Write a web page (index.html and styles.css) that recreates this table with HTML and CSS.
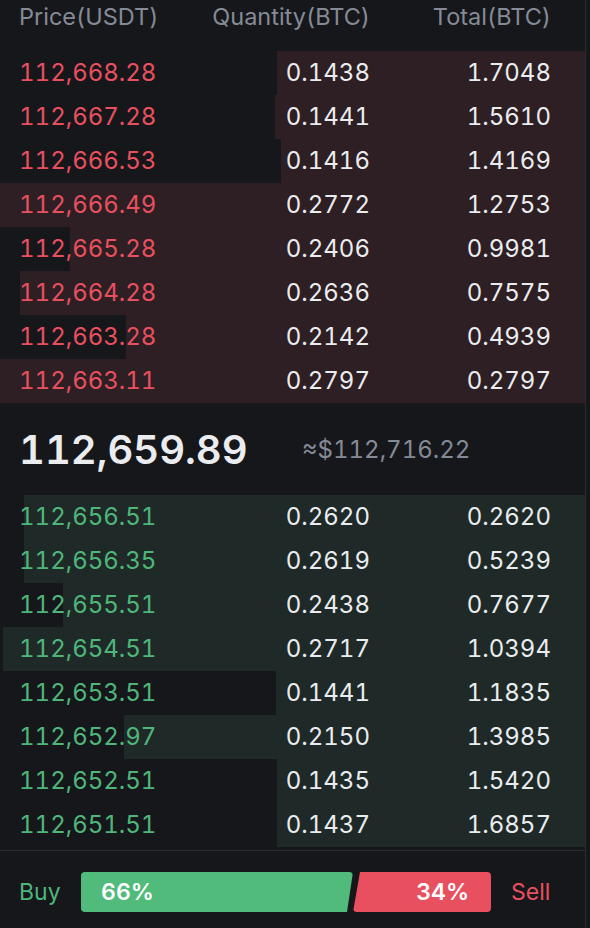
FILE: index.html
```html
<!DOCTYPE html>
<html>
<head>
<meta charset="utf-8">
<link rel="stylesheet" href="styles.css">
</head>
<body>
<div class="book">
  <div class="row head">
    <span>Price(USDT)</span>
    <span class="r">Quantity(BTC)</span>
    <span class="r">Total(BTC)</span>
  </div>
  <div class="asks">
    <div class="row ask" style="--w:308px"><span class="p">112,668.28</span><span class="r">0.1438</span><span class="r">1.7048</span></div>
    <div class="row ask" style="--w:310px"><span class="p">112,667.28</span><span class="r">0.1441</span><span class="r">1.5610</span></div>
    <div class="row ask" style="--w:304px"><span class="p">112,666.53</span><span class="r">0.1416</span><span class="r">1.4169</span></div>
    <div class="row ask" style="--w:585px"><span class="p">112,666.49</span><span class="r">0.2772</span><span class="r">1.2753</span></div>
    <div class="row ask" style="--w:515px"><span class="p">112,665.28</span><span class="r">0.2406</span><span class="r">0.9981</span></div>
    <div class="row ask" style="--w:565px"><span class="p">112,664.28</span><span class="r">0.2636</span><span class="r">0.7575</span></div>
    <div class="row ask" style="--w:459px"><span class="p">112,663.28</span><span class="r">0.2142</span><span class="r">0.4939</span></div>
    <div class="row ask" style="--w:585px"><span class="p">112,663.11</span><span class="r">0.2797</span><span class="r">0.2797</span></div>
  </div>
  <div class="mid">
    <span class="last">112,659.89</span>
    <span class="fiat">≈$112,716.22</span>
  </div>
  <div class="bids">
    <div class="row bid" style="--w:561px"><span class="p">112,656.51</span><span class="r">0.2620</span><span class="r">0.2620</span></div>
    <div class="row bid" style="--w:561px"><span class="p">112,656.35</span><span class="r">0.2619</span><span class="r">0.5239</span></div>
    <div class="row bid" style="--w:522px"><span class="p">112,655.51</span><span class="r">0.2438</span><span class="r">0.7677</span></div>
    <div class="row bid" style="--w:582px"><span class="p">112,654.51</span><span class="r">0.2717</span><span class="r">1.0394</span></div>
    <div class="row bid" style="--w:309px"><span class="p">112,653.51</span><span class="r">0.1441</span><span class="r">1.1835</span></div>
    <div class="row bid" style="--w:461px"><span class="p">112,652.97</span><span class="r">0.2150</span><span class="r">1.3985</span></div>
    <div class="row bid" style="--w:308px"><span class="p">112,652.51</span><span class="r">0.1435</span><span class="r">1.5420</span></div>
    <div class="row bid" style="--w:308px"><span class="p">112,651.51</span><span class="r">0.1437</span><span class="r">1.6857</span></div>
  </div>
  <div class="ratio">
    <span class="buy">Buy</span>
    <div class="bar">
      <div class="seg green">66%</div>
      <div class="seg red">34%</div>
    </div>
    <span class="sell">Sell</span>
  </div>
</div>
</body>
</html>
```

FILE: styles.css
```css
html, body {
  margin: 0;
  padding: 0;
  background: #16171b;
}
body {
  width: 590px;
  height: 928px;
  overflow: hidden;
  font-family: Inter, "Noto Sans", sans-serif;
  font-variant-numeric: tabular-nums;
  color: #eaecef;
}
.book {
  width: 585px;
  height: 928px;
  border-right: 1px solid #2a2c31;
  display: flex;
  flex-direction: column;
}
.row {
  display: grid;
  grid-template-columns: 231px 120px 181px;
  align-items: center;
  height: 44px;
  padding-left: 19px;
  font-size: 24px;
  line-height: 1;
  box-sizing: border-box;
  flex-shrink: 0;
}
.row .r { justify-self: end; text-align: right; white-space: nowrap; }
.head {
  height: 34px;
  margin-bottom: 17px;
  color: #858b96;
  font-size: 23.5px;
}
.ask {
  background: linear-gradient(to left, #2d1f24 var(--w), transparent var(--w));
}
.ask .p { color: #e8505f; }
.bid {
  background: linear-gradient(to left, #1f2a28 var(--w), transparent var(--w));
}
.bid .p { color: #4fb67a; }
.mid {
  height: 92px;
  flex-shrink: 0;
  display: flex;
  align-items: center;
  padding-left: 19px;
}
.last {
  width: 283px;
  font-size: 40px;
  font-weight: 600;
  color: #eaecef;
}
.fiat {
  font-size: 24px;
  color: #858b96;
}
.ratio {
  margin-top: 3px;
  border-top: 1px solid #2a2c31;
  display: flex;
  align-items: center;
  height: 82px;
  flex-shrink: 0;
  padding-left: 19px;
  font-size: 23px;
}
.buy { color: #4fb67a; width: 62px; }
.sell { color: #e8505f; margin-left: 20px; }
.bar {
  display: flex;
  width: 410px;
  height: 40px;
}
.seg {
  height: 40px;
  display: flex;
  align-items: center;
  font-weight: 600;
  color: #ffffff;
  font-size: 23px;
}
.green {
  width: 272px;
  background: #50bb7a;
  border-radius: 4px;
  padding-left: 20px;
  box-sizing: border-box;
  clip-path: polygon(0 0, 100% 0, calc(100% - 6px) 100%, 0 100%);
}
.red {
  width: 138px;
  background: #e8505f;
  border-radius: 4px;
  justify-content: flex-end;
  padding-right: 22px;
  box-sizing: border-box;
  clip-path: polygon(7px 0, 100% 0, 100% 100%, 0 100%);
}
```
